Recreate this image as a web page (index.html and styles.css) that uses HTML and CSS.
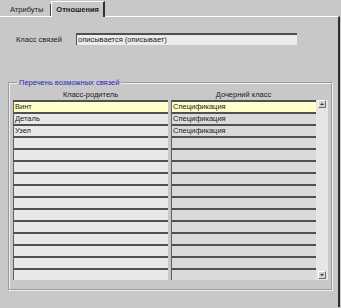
FILE: index.html
```html
<!DOCTYPE html>
<html lang="ru">
<head>
  <meta charset="UTF-8">
  <meta name="viewport" content="width=device-width, initial-scale=1.0">
  <title>Отношения</title>
  <link rel="stylesheet" href="styles.css">
</head>
<body>
  <div class="tabs">
    <div class="tab">Атрибуты</div>
    <div class="tab active">Отношения</div>
  </div>

  <div class="panel">
    <div class="field">
      <label class="field-label">Класс связей</label>
      <div class="field-input">описывается (описывает)</div>
    </div>

    <fieldset class="group">
      <legend>Перечень возможных связей</legend>
      <div class="head">
        <div>Класс-родитель</div>
        <div>Дочерний класс</div>
      </div>
      <div class="list">
        <div class="cols" id="rows"></div>
        <div class="scroll">
          <div class="arrow up"></div>
          <div class="arrow down"></div>
        </div>
      </div>
    </fieldset>
  </div>

  <script>
    const rows = document.getElementById('rows');
    const data = [
      ['Винт', 'Спецификация'],
      ['Деталь', 'Спецификация'],
      ['Узел', 'Спецификация']
    ];

    for (let i = 0; i < 15; i++) {
      const item = data[i] || ['', ''];
      const parent = document.createElement('div');
      parent.className = 'cell parent' + (i === 0 ? ' selected' : '');
      parent.textContent = item[0];
      const child = document.createElement('div');
      child.className = 'cell child' + (i === 0 ? ' selected' : '');
      child.textContent = item[1];
      rows.appendChild(parent);
      rows.appendChild(child);
    }
  </script>
</body>
</html>
```

FILE: styles.css
```css
body {
  font-family: "Liberation Sans", Arial, sans-serif;
  font-size: 7.5px;
  background-color: #c8c8c8;
  color: #1a1a1a;
  margin: 0;
  padding: 0;
  width: 341px;
  height: 308px;
  overflow: hidden;
}
.tabs {
  display: flex;
  align-items: flex-end;
  height: 16px;
  padding-left: 3px;
}
.tab {
  height: 12px;
  line-height: 12px;
  padding: 0 7px;
  border-right: 1px solid #404040;
}
.tab.active {
  height: 15px;
  line-height: 15px;
  font-weight: bold;
  padding: 0 4px 0 4px;
  border-left: 1px solid #fff;
  border-top: 1px solid #fff;
  border-right: 2px solid #303030;
  margin-bottom: -1px;
  background-color: #c8c8c8;
  position: relative;
}
.panel {
  border-top: 1px solid #fff;
  border-right: 2px solid #303030;
  height: 291px;
  padding-top: 16px;
  box-sizing: border-box;
  width: 340px;
}
.field {
  display: flex;
  align-items: center;
  height: 12px;
  padding-left: 16px;
}
.field-label {
  width: 60px;
}
.field-input {
  width: 221px;
  height: 12px;
  box-sizing: border-box;
  border-top: 2px solid #505050;
  border-left: 1px solid #505050;
  background-color: #ececec;
  line-height: 10px;
  padding-left: 1px;
}
.group {
  margin: 33px 0 0 8px;
  padding: 0 3px 9px 3px;
  width: 325px;
  box-sizing: border-box;
  border: 2px groove #eeeeee;
}
.group legend {
  color: #2a2ab8;
  padding: 0 2px;
  margin-left: 4px;
  line-height: 10px;
}
.head {
  display: grid;
  grid-template-columns: 155px 145px;
  column-gap: 3px;
  height: 12px;
  line-height: 14px;
  text-align: center;
}
.list {
  display: flex;
}
.cols {
  display: grid;
  grid-template-columns: 155px 145px;
  grid-auto-rows: 12px;
  column-gap: 3px;
}
.cell {
  box-sizing: border-box;
  border-top: 2px solid #505050;
  border-left: 1px solid #606060;
  background-color: #e8e8e8;
  line-height: 10px;
  padding-left: 1px;
  white-space: nowrap;
  overflow: hidden;
}
.cell.child {
  background-color: #dadada;
}
.cell.selected {
  background-color: #ffffcc;
}
.scroll {
  width: 12px;
  background-color: #e6e6e6;
  display: flex;
  flex-direction: column;
  justify-content: space-between;
  align-items: center;
  padding: 0 0 1px;
}
.arrow {
  width: 8px;
  height: 8px;
  box-sizing: border-box;
  border: 1px solid;
  border-color: #fff #707070 #707070 #fff;
  background-color: #d0d0d0;
  display: flex;
  align-items: center;
  justify-content: center;
}
.arrow::after {
  content: "";
  border-left: 2px solid transparent;
  border-right: 2px solid transparent;
}
.arrow.up::after {
  border-bottom: 2px solid #333;
}
.arrow.down::after {
  border-top: 2px solid #333;
}
```
